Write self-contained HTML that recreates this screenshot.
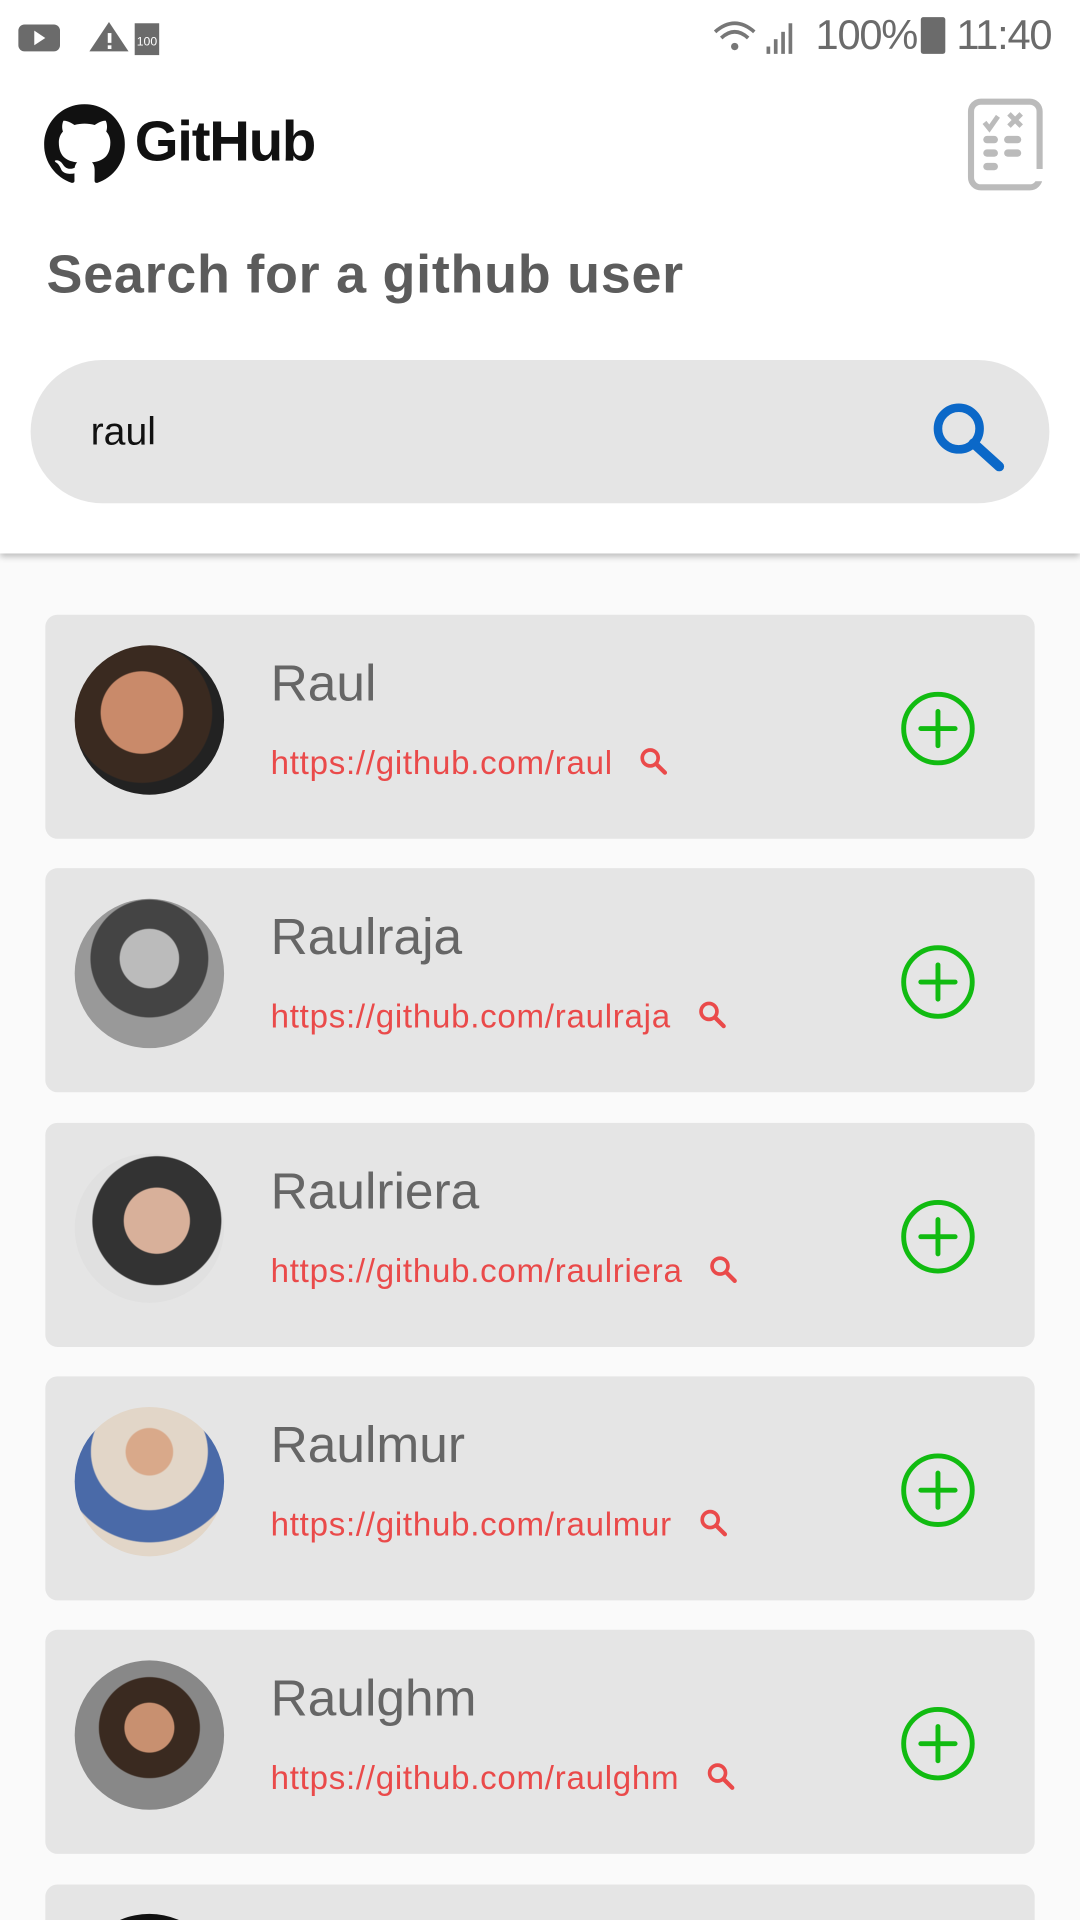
<!DOCTYPE html>
<html><head><meta charset="utf-8"><style>
html,body{margin:0;padding:0;width:1080px;height:1920px;overflow:hidden;background:#fafafa;font-family:"Liberation Sans",sans-serif}
#w{width:882px;height:1568px;transform:scale(1.22449);transform-origin:0 0;position:relative;overflow:hidden}
.abs{position:absolute}
.hdr{position:absolute;left:0;top:0;width:882px;height:452px;background:#fff;box-shadow:0 3px 5px rgba(0,0,0,.25)}
.card{position:absolute;left:37px;width:808px;height:183px;background:#e5e5e5;border-radius:10px}
.av{position:absolute;left:24px;top:25px;width:122px;height:122px;border-radius:50%}
.nm{position:absolute;left:184px;top:32px;font-size:42px;color:#666}
.url{position:absolute;left:184px;top:106px;font-size:27px;letter-spacing:0.6px;color:#ea4a4a}
.url svg{vertical-align:-2px;margin-left:22px}
.plus{position:absolute;left:698px;top:62px}
</style></head><body><div id="w">
<div class="hdr"></div>
<svg class="abs" style="left:14px;top:16px" width="120" height="30"><rect x="1" y="4" width="34" height="22" rx="5" fill="#6b6b6b"/><path d="M14 9 L23 15 L14 21Z" fill="#fff"/><path d="M75 2 L91 26 L59 26Z" fill="#6b6b6b"/><rect x="74" y="11" width="3" height="8" fill="#fff"/><rect x="74" y="21" width="3" height="3" fill="#fff"/><rect x="96" y="3" width="20" height="26" fill="#6b6b6b"/><text x="106" y="21" font-size="10" fill="#fff" text-anchor="middle" font-family="Liberation Sans">100</text></svg>
<svg class="abs" style="left:580px;top:14px" width="80" height="32"><path d="M4 12 Q20 -2 36 12" stroke="#777" stroke-width="3" fill="none"/><path d="M9 17 Q20 7 31 17" stroke="#777" stroke-width="3" fill="none"/><circle cx="20" cy="24" r="3" fill="#777"/><rect x="46" y="24" width="3" height="6" fill="#777"/><rect x="52" y="18" width="3" height="12" fill="#777"/><rect x="58" y="12" width="3" height="18" fill="#777"/><rect x="64" y="5" width="3" height="25" fill="#777"/></svg>
<div class="abs" style="left:666px;top:10px;font-size:34px;color:#6b6b6b;letter-spacing:-1px">100%</div>
<div class="abs" style="left:752px;top:14px;width:20px;height:30px;background:#6b6b6b;border-radius:2px"></div>
<div class="abs" style="left:781px;top:10px;font-size:34px;color:#6b6b6b;letter-spacing:-1px">11:40</div>
<svg class="abs" style="left:36px;top:85px" width="66" height="66" viewBox="0 0 16 16"><path fill="#111" d="M8 0C3.58 0 0 3.58 0 8c0 3.54 2.290 6.530 5.470 7.590.4.07.55-.17.55-.38 0-.19-.01-.82-.01-1.490-2.010.37-2.530-.49-2.690-.94-.09-.23-.48-.94-.82-1.130-.28-.15-.68-.52-.01-.53.63-.01 1.080.58 1.230.82.72 1.210 1.870.87 2.330.66.07-.52.28-.87.51-1.070-1.780-.2-3.640-.89-3.640-3.950 0-.87.31-1.590.82-2.150-.08-.2-.36-1.020.08-2.120 0 0 .67-.21 2.200.82.64-.18 1.320-.27 2-.27.68 0 1.360.09 2 .27 1.530-1.040 2.200-.82 2.200-.82.44 1.100.16 1.920.08 2.120.51.56.82 1.270.82 2.150 0 3.070-1.870 3.750-3.650 3.950.29.25.54.73.54 1.480 0 1.070-.01 1.930-.01 2.200 0 .21.15.46.55.38A8.013 8.013 0 0016 8c0-4.420-3.580-8-8-8z"/></svg>
<div class="abs" style="left:110px;top:88px;font-size:46px;font-weight:bold;color:#111;letter-spacing:-1px">GitHub</div>
<svg class="abs" style="left:790px;top:80px" width="62" height="76"><rect x="3" y="3" width="56" height="70" rx="8" fill="none" stroke="#bbb" stroke-width="5"/><rect x="50" y="58" width="12" height="10" fill="#fff"/><path d="M14 20 l4 5 l7 -10" stroke="#bbb" stroke-width="4" fill="none"/><path d="M34 13 l10 10 M44 13 l-10 10" stroke="#bbb" stroke-width="4"/><g fill="#bbb"><rect x="13" y="31" width="12" height="6" rx="3"/><rect x="30" y="31" width="14" height="6" rx="3"/><rect x="13" y="42" width="12" height="6" rx="3"/><rect x="30" y="42" width="14" height="6" rx="3"/><rect x="13" y="53" width="12" height="6" rx="3"/></g></svg>
<div class="abs" style="left:38px;top:200px;font-size:44px;font-weight:bold;color:#5c5c5c;letter-spacing:0.6px">Search for a github user</div>
<div class="abs" style="left:25px;top:294px;width:832px;height:117px;background:#e5e5e5;border-radius:59px"></div>
<div class="abs" style="left:74px;top:334px;font-size:32px;color:#111">raul</div>
<svg class="abs" style="left:758px;top:325px" width="64" height="60"><circle cx="25" cy="25" r="17" stroke="#0b68c8" stroke-width="7" fill="none"/><path d="M37 37 L58 56" stroke="#0b68c8" stroke-width="8" stroke-linecap="round"/></svg>

<div class="card" style="top:502px"><div class="av" style="background:radial-gradient(circle at 45% 45%,#c98a6a 0 35%,#3a2a20 36% 60%,#222 61%)"></div><div class="nm">Raul</div><div class="url">https://github.com/raul<svg width="24" height="24"><circle cx="9" cy="9" r="6.5" stroke="#ea4a4a" stroke-width="3" fill="none"/><path d="M14 14 L21 21" stroke="#ea4a4a" stroke-width="3.5" stroke-linecap="round"/></svg></div><svg class="plus" width="62" height="62"><circle cx="31" cy="31" r="28" stroke="#11bb11" stroke-width="4" fill="none"/><path d="M31 17v28M17 31h28" stroke="#11bb11" stroke-width="4" stroke-linecap="round"/></svg></div>
<div class="card" style="top:709px"><div class="av" style="background:radial-gradient(circle at 50% 40%,#bbb 0 25%,#444 26% 50%,#999 51%)"></div><div class="nm">Raulraja</div><div class="url">https://github.com/raulraja<svg width="24" height="24"><circle cx="9" cy="9" r="6.5" stroke="#ea4a4a" stroke-width="3" fill="none"/><path d="M14 14 L21 21" stroke="#ea4a4a" stroke-width="3.5" stroke-linecap="round"/></svg></div><svg class="plus" width="62" height="62"><circle cx="31" cy="31" r="28" stroke="#11bb11" stroke-width="4" fill="none"/><path d="M31 17v28M17 31h28" stroke="#11bb11" stroke-width="4" stroke-linecap="round"/></svg></div>
<div class="card" style="top:917px"><div class="av" style="background:radial-gradient(circle at 55% 45%,#d8b09a 0 28%,#333 29% 55%,#e0e0e0 56%)"></div><div class="nm">Raulriera</div><div class="url">https://github.com/raulriera<svg width="24" height="24"><circle cx="9" cy="9" r="6.5" stroke="#ea4a4a" stroke-width="3" fill="none"/><path d="M14 14 L21 21" stroke="#ea4a4a" stroke-width="3.5" stroke-linecap="round"/></svg></div><svg class="plus" width="62" height="62"><circle cx="31" cy="31" r="28" stroke="#11bb11" stroke-width="4" fill="none"/><path d="M31 17v28M17 31h28" stroke="#11bb11" stroke-width="4" stroke-linecap="round"/></svg></div>
<div class="card" style="top:1124px"><div class="av" style="background:radial-gradient(circle at 50% 30%,#d9a98a 0 18%,#e2d6c8 19% 45%,#4a6aa8 46% 70%,#e2d6c8 71%)"></div><div class="nm">Raulmur</div><div class="url">https://github.com/raulmur<svg width="24" height="24"><circle cx="9" cy="9" r="6.5" stroke="#ea4a4a" stroke-width="3" fill="none"/><path d="M14 14 L21 21" stroke="#ea4a4a" stroke-width="3.5" stroke-linecap="round"/></svg></div><svg class="plus" width="62" height="62"><circle cx="31" cy="31" r="28" stroke="#11bb11" stroke-width="4" fill="none"/><path d="M31 17v28M17 31h28" stroke="#11bb11" stroke-width="4" stroke-linecap="round"/></svg></div>
<div class="card" style="top:1331px"><div class="av" style="background:radial-gradient(circle at 50% 45%,#c89070 0 22%,#3a2a20 23% 45%,#888 46%)"></div><div class="nm">Raulghm</div><div class="url">https://github.com/raulghm<svg width="24" height="24"><circle cx="9" cy="9" r="6.5" stroke="#ea4a4a" stroke-width="3" fill="none"/><path d="M14 14 L21 21" stroke="#ea4a4a" stroke-width="3.5" stroke-linecap="round"/></svg></div><svg class="plus" width="62" height="62"><circle cx="31" cy="31" r="28" stroke="#11bb11" stroke-width="4" fill="none"/><path d="M31 17v28M17 31h28" stroke="#11bb11" stroke-width="4" stroke-linecap="round"/></svg></div>
<div class="card" style="top:1539px"><div class="av" style="background:#111;top:24px"></div></div>
</div></body></html>
